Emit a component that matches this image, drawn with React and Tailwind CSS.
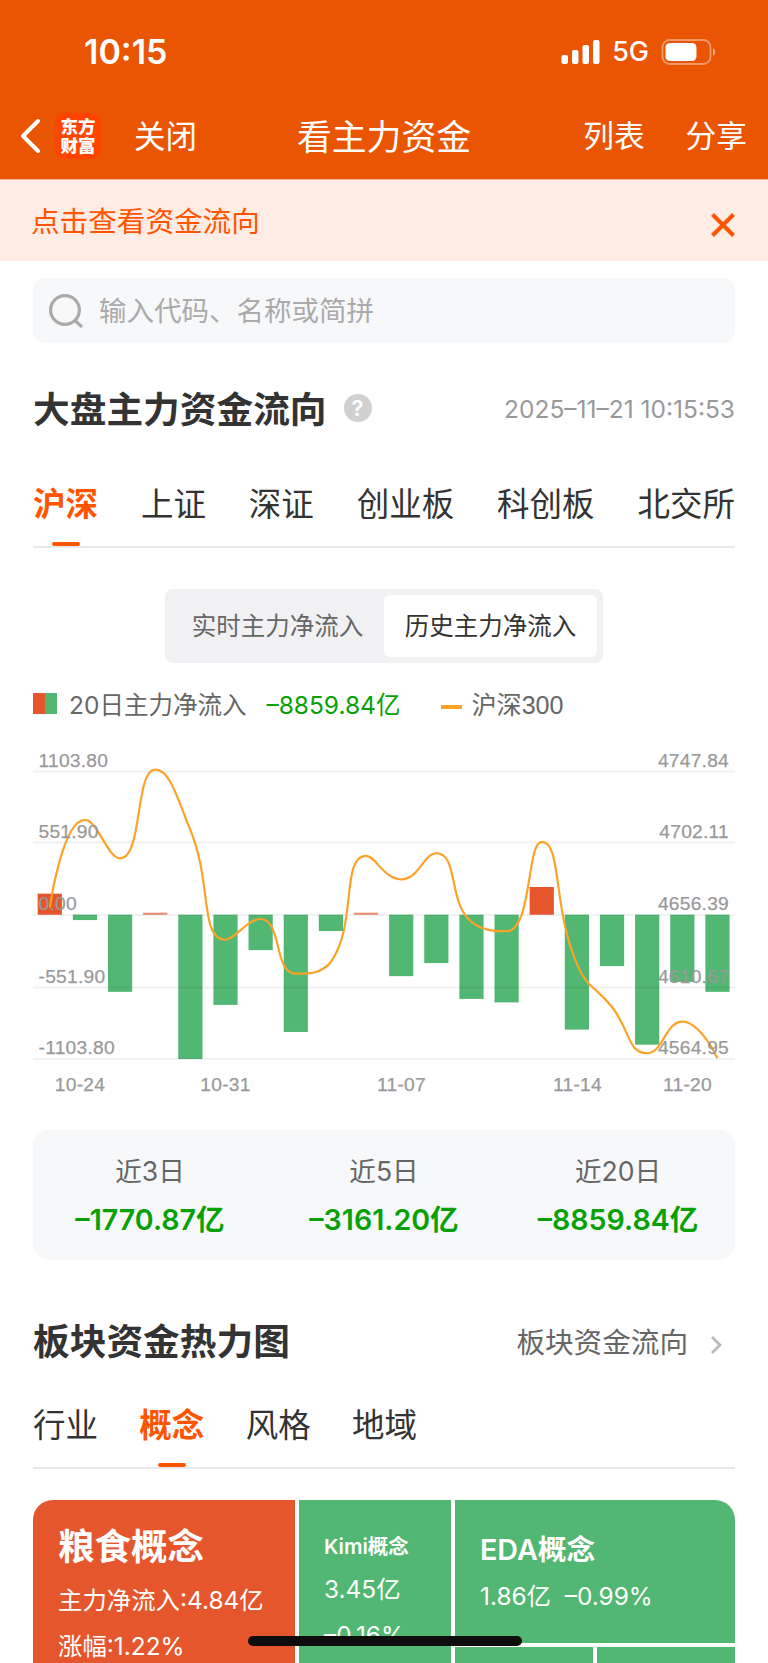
import { useState } from 'react';

const MARKETS = ['沪深', '上证', '深证', '创业板', '科创板', '北交所'];
const SECTORS = ['行业', '概念', '风格', '地域'];
const MODES = ['实时主力净流入', '历史主力净流入'];

const SUMMARY = [
  { label: '近3日', value: '–1770.87亿' },
  { label: '近5日', value: '–3161.20亿' },
  { label: '近20日', value: '–8859.84亿' },
];

// Daily net inflow (亿) and CSI 300 close, oldest first
const INFLOW = [
  161, -41, -590, 15, -1103.8, -690, -271, -897, -125, 15,
  -470, -370, -644, -671, 212, -879, -393, -994, -514, -590,
];
const CLOSE = [
  4661.4, 4717, 4692.6, 4749, 4710.6, 4640.8, 4654, 4619.2, 4626.8, 4694.1,
  4679.2, 4695.8, 4652.1, 4646.2, 4703, 4625.4, 4598, 4568.6, 4588.7, 4565.4,
];

const GRID = [
  { y: 31.5, left: '1103.80', right: '4747.84' },
  { y: 102.5, left: '551.90', right: '4702.11' },
  { y: 175, left: '0.00', right: '4656.39' },
  { y: 247.5, left: '-551.90', right: '4610.67' },
  { y: 319, left: '-1103.80', right: '4564.95' },
];
const DATES = [
  { x: 47, text: '10-24' },
  { x: 192.5, text: '10-31' },
  { x: 368.5, text: '11-07' },
  { x: 544.5, text: '11-14' },
  { x: 654.5, text: '11-20' },
];

const ZERO_Y = 174.7;
const barX = i => 4.7 + i * 35.14;
const inflowY = v => ZERO_Y - (v / 1103.8) * 144.3;
const closeY = v => 319 - (v - 4564.95) / 0.636;

const clamp = (v, a, b) => Math.min(Math.max(v, Math.min(a, b)), Math.max(a, b));

// Smooth curve whose control points never leave the box of their own segment
function smoothPath(pts, smooth = 0.5) {
  let d = `M${pts[0].x},${pts[0].y}`;
  let out = pts[0];
  for (let i = 1; i < pts.length; i++) {
    const prev = pts[i - 1];
    const p = pts[i];
    const next = pts[i + 1];
    let cpIn = p;
    let cpOut = p;
    if (next) {
      const lenPrev = Math.hypot(p.x - prev.x, p.y - prev.y);
      const lenNext = Math.hypot(next.x - p.x, next.y - p.y);
      const vx = next.x - prev.x;
      const vy = next.y - prev.y;
      const r = lenNext / (lenNext + lenPrev);
      const nx = clamp(p.x + vx * smooth * r, p.x, next.x);
      const ny = clamp(p.y + vy * smooth * r, p.y, next.y);
      cpIn = {
        x: clamp(p.x - ((nx - p.x) * lenPrev) / lenNext, prev.x, p.x),
        y: clamp(p.y - ((ny - p.y) * lenPrev) / lenNext, prev.y, p.y),
      };
      cpOut = {
        x: p.x + ((p.x - cpIn.x) * lenNext) / lenPrev,
        y: p.y + ((p.y - cpIn.y) * lenNext) / lenPrev,
      };
    }
    d += `C${out.x},${out.y} ${cpIn.x},${cpIn.y} ${p.x},${p.y}`;
    out = cpOut;
  }
  return d;
}

function FlowChart() {
  const line = smoothPath(CLOSE.map((v, i) => ({ x: barX(i) + 12.1, y: closeY(v) })));
  return (
    <svg width="702" height="370" viewBox="0 0 702 370" className="block">
      {INFLOW.map((v, i) => {
        const y = inflowY(v);
        return (
          <rect
            key={i}
            x={barX(i)}
            y={Math.min(y, ZERO_Y)}
            width="24.2"
            height={Math.abs(y - ZERO_Y)}
            fill={v > 0 ? '#e5562d' : '#51b772'}
            opacity={v > 0 && v < 20 ? 0.7 : 1}
          />
        );
      })}
      {GRID.map(g => (
        <rect key={g.y} x="0" y={g.y - 1} width="702" height="2" fill="#000" opacity="0.055" />
      ))}
      <path d={line} fill="none" stroke="#fba329" strokeWidth="2.2" />
      <g className="font-['Liberation_Sans',sans-serif] text-[19.2px] tracking-[0.25px]" fill="#999" stroke="#999" strokeWidth="0.25">
        {GRID.map(g => (
          <g key={g.y}>
            <text x="5.5" y={g.y - 5}>{g.left}</text>
            <text x="696" y={g.y - 5} textAnchor="end">{g.right}</text>
          </g>
        ))}
        {DATES.map(d => (
          <text key={d.text} x={d.x} y="350.5" textAnchor="middle">{d.text}</text>
        ))}
      </g>
    </svg>
  );
}

function Tabs({ items, active, onSelect, className }) {
  return (
    <div className={`flex border-b-2 border-[#e8e8e8] text-[32.5px] leading-[50px] text-[#333] ${className}`}>
      {items.map(item => (
        <button
          key={item}
          type="button"
          onClick={() => onSelect(item)}
          className={item === active ? 'flex flex-col items-center font-bold text-[#ff5500]' : 'flex flex-col items-center'}
        >
          <span className="whitespace-nowrap">{item}</span>
          {item === active && <span className="mt-auto h-[4.5px] w-7 rounded-full bg-[#ff5500]" />}
        </button>
      ))}
    </div>
  );
}

function StatusBar() {
  return (
    <div className="flex h-[102px] items-center justify-between pl-[84px] pr-[51px] pt-px">
      <span className="text-[34px] font-semibold">10:15</span>
      <div className="flex items-center">
        <svg width="40" height="26" viewBox="0 0 40 26" fill="currentColor">
          <rect x="0.5" y="16" width="6.5" height="9" rx="2" />
          <rect x="11" y="11" width="6.5" height="14" rx="2" />
          <rect x="21.5" y="6" width="6.5" height="19" rx="2" />
          <rect x="32" y="1" width="6.5" height="24" rx="2" />
        </svg>
        <span className="ml-[11px] pt-0.5 text-[27px] font-medium">5G</span>
        <svg width="56" height="26" viewBox="0 0 56 26" className="ml-3">
          <rect x="1.5" y="1" width="48" height="24" rx="7" fill="none" stroke="#fff" strokeOpacity="0.4" strokeWidth="1.8" />
          <rect x="4.5" y="4" width="31" height="18" rx="4.5" fill="#fff" />
          <path d="M52 9v8c3-1.5 3-6.5 0-8z" fill="#fff" fillOpacity="0.5" />
        </svg>
      </div>
    </div>
  );
}

function NavBar() {
  return (
    <div className="grid h-[68px] grid-cols-[1fr_auto_1fr] items-center text-[30.7px]">
      <div className="flex items-center pl-5">
        <svg width="22" height="36" viewBox="0 0 22 36" fill="none" stroke="currentColor" strokeWidth="4" strokeLinecap="round" strokeLinejoin="round">
          <path d="M18 3 3 18l15 15" />
        </svg>
        <div className="ml-[13px] flex h-[46px] w-[46px] flex-col items-center justify-center rounded-[9px] bg-[#ff4400] text-[17.5px] font-black leading-[19px]">
          <span>东方</span>
          <span>财富</span>
        </div>
        <span className="ml-[33px] pt-0.5 text-[31.5px]">关闭</span>
      </div>
      <span className="pt-0.5 text-[34.8px]">看主力资金</span>
      <div className="flex justify-end gap-[41px] pr-[21px] pt-px">
        <span>列表</span>
        <span>分享</span>
      </div>
    </div>
  );
}

export default function App() {
  const [market, setMarket] = useState('沪深');
  const [sector, setSector] = useState('概念');
  const [mode, setMode] = useState(MODES[1]);

  return (
    <div className="relative h-[1663px] w-[768px] overflow-hidden bg-white font-['Inter','Noto_Sans_CJK_SC',sans-serif] text-[#333]">
      <header className="h-[180px] border-b border-[#f9b595] bg-[#ea5504] text-white">
        <StatusBar />
        <NavBar />
      </header>

      <div className="flex h-[81px] items-center justify-between bg-[#ffece5] pl-[31px] pr-[33px] text-[#ff5500]">
        <span className="pt-[3px] text-[28.6px]">点击查看资金流向</span>
        <svg width="24" height="24" viewBox="0 0 24 24" stroke="currentColor" strokeWidth="4" className="mt-2">
          <path d="M1.5 1.5l21 21M22.5 1.5l-21 21" />
        </svg>
      </div>

      <main className="px-[33px]">
        <div className="mt-[17px] flex h-[65px] items-center rounded-xl bg-[#f7f8fa] pl-4 text-[27.5px] text-[#aaa]">
          <svg width="34" height="34" viewBox="0 0 34 34" fill="none" stroke="currentColor" strokeWidth="3.2" strokeLinecap="round">
            <circle cx="16" cy="16" r="14.4" />
            <path d="M26.5 27l5.5 5" />
          </svg>
          <span className="ml-4 pt-0.5">输入代码、名称或简拼</span>
        </div>

        <div className="mt-[36px] flex h-[60px] items-center">
          <h2 className="pt-px text-[36.7px] font-bold">大盘主力资金流向</h2>
          <span className="mb-0.5 ml-[17px] flex h-7 w-7 items-center justify-center rounded-full bg-[#d0d0d2] text-[22px] font-semibold leading-none text-white">?</span>
          <span className="ml-auto text-[24.5px] text-[#999]">2025–11–21 10:15:53</span>
        </div>

        <Tabs items={MARKETS} active={market} onSelect={setMarket} className="mt-[41px] h-[68px] justify-between" />

        <div className="mx-auto mt-[41px] flex h-[74px] w-[438px] rounded-lg bg-[#f1f1f4] p-1.5 text-[24.5px]">
          {MODES.map(m => (
            <button
              key={m}
              type="button"
              onClick={() => setMode(m)}
              className={m === mode ? 'flex-1 rounded-md bg-white pt-px text-[#333]' : 'flex-1 pt-px text-[#666]'}
            >
              {m}
            </button>
          ))}
        </div>

        <div className="mt-[22px] flex h-[40px] items-center text-[24.5px] text-[#666]">
          <span className="mb-1 h-[21px] w-3 bg-[#e5562d]" />
          <span className="mb-1 h-[21px] w-3 bg-[#51b772]" />
          <span className="ml-3">20日主力净流入</span>
          <span className="ml-[20px] text-[#07a106]">–8859.84亿</span>
          <span className="ml-[41px] mt-1 h-1 w-[21px] bg-[#fca326]" />
          <span className="ml-[9px] pt-0.5 font-['Liberation_Sans','Noto_Sans_CJK_SC',sans-serif] text-[25.1px]">沪深300</span>
        </div>

        <div className="mt-[15px]">
          <FlowChart />
        </div>

        <div className="mt-5 grid h-[130px] grid-cols-3 rounded-2xl bg-[#f7f8fa] pt-[21px] text-center">
          {SUMMARY.map(s => (
            <div key={s.label}>
              <div className="text-[26.6px] leading-[40px] text-[#666]">{s.label}</div>
              <div className="mt-[9px] text-[28.6px] font-semibold leading-[40px] text-[#07a106]">{s.value}</div>
            </div>
          ))}
        </div>

        <div className="mt-[52px] flex h-[60px] items-center">
          <h2 className="text-[36.7px] font-bold">板块资金热力图</h2>
          <span className="ml-auto pt-0.5 text-[28.6px] text-[#666]">板块资金流向</span>
          <svg width="12" height="20" viewBox="0 0 12 20" fill="none" stroke="#bbb" strokeWidth="2.8" className="ml-[22px] mr-[13px] mt-1.5">
            <path d="M2 2l8 8-8 8" />
          </svg>
        </div>

        <Tabs items={SECTORS} active={sector} onSelect={setSector} className="mt-[29px] h-[68px] gap-[41.3px]" />

        <div className="mt-[30.5px] flex h-[240px] gap-1 overflow-hidden rounded-[20px] text-[24.4px] leading-[36px] text-white">
          <div className="w-[262px] shrink-0 bg-[#e5562d] pl-[25px] pt-[19.5px]">
            <div className="text-[36.5px] font-bold leading-[56px]">粮食概念</div>
            <div className="mt-[7px]">主力净流入:4.84亿</div>
            <div className="mt-[10px]">涨幅:1.22%</div>
          </div>
          <div className="w-[152px] shrink-0 bg-[#51b772] pl-[25px] pt-[29.5px]">
            <div className="text-[20.5px] font-semibold">Kimi概念</div>
            <div className="mt-[6px]">3.45亿</div>
            <div className="mt-[10px]">–0.16%</div>
          </div>
          <div className="flex flex-1 flex-col gap-1">
            <div className="h-[143.5px] bg-[#51b772] pl-[25px] pt-[28px]">
              <div className="text-[28.7px] font-semibold leading-[44px]">EDA概念</div>
              <div className="mt-[6px]">1.86亿&nbsp; –0.99%</div>
            </div>
            <div className="flex flex-1 gap-1">
              <div className="flex-1 bg-[#51b772]" />
              <div className="flex-1 bg-[#51b772]" />
            </div>
          </div>
        </div>
      </main>

      {/* Home indicator floats over the page */}
      <div className="absolute bottom-[17px] left-[247.5px] h-[10px] w-[274px] rounded-full bg-[#0d0d0d]" />
    </div>
  );
}
